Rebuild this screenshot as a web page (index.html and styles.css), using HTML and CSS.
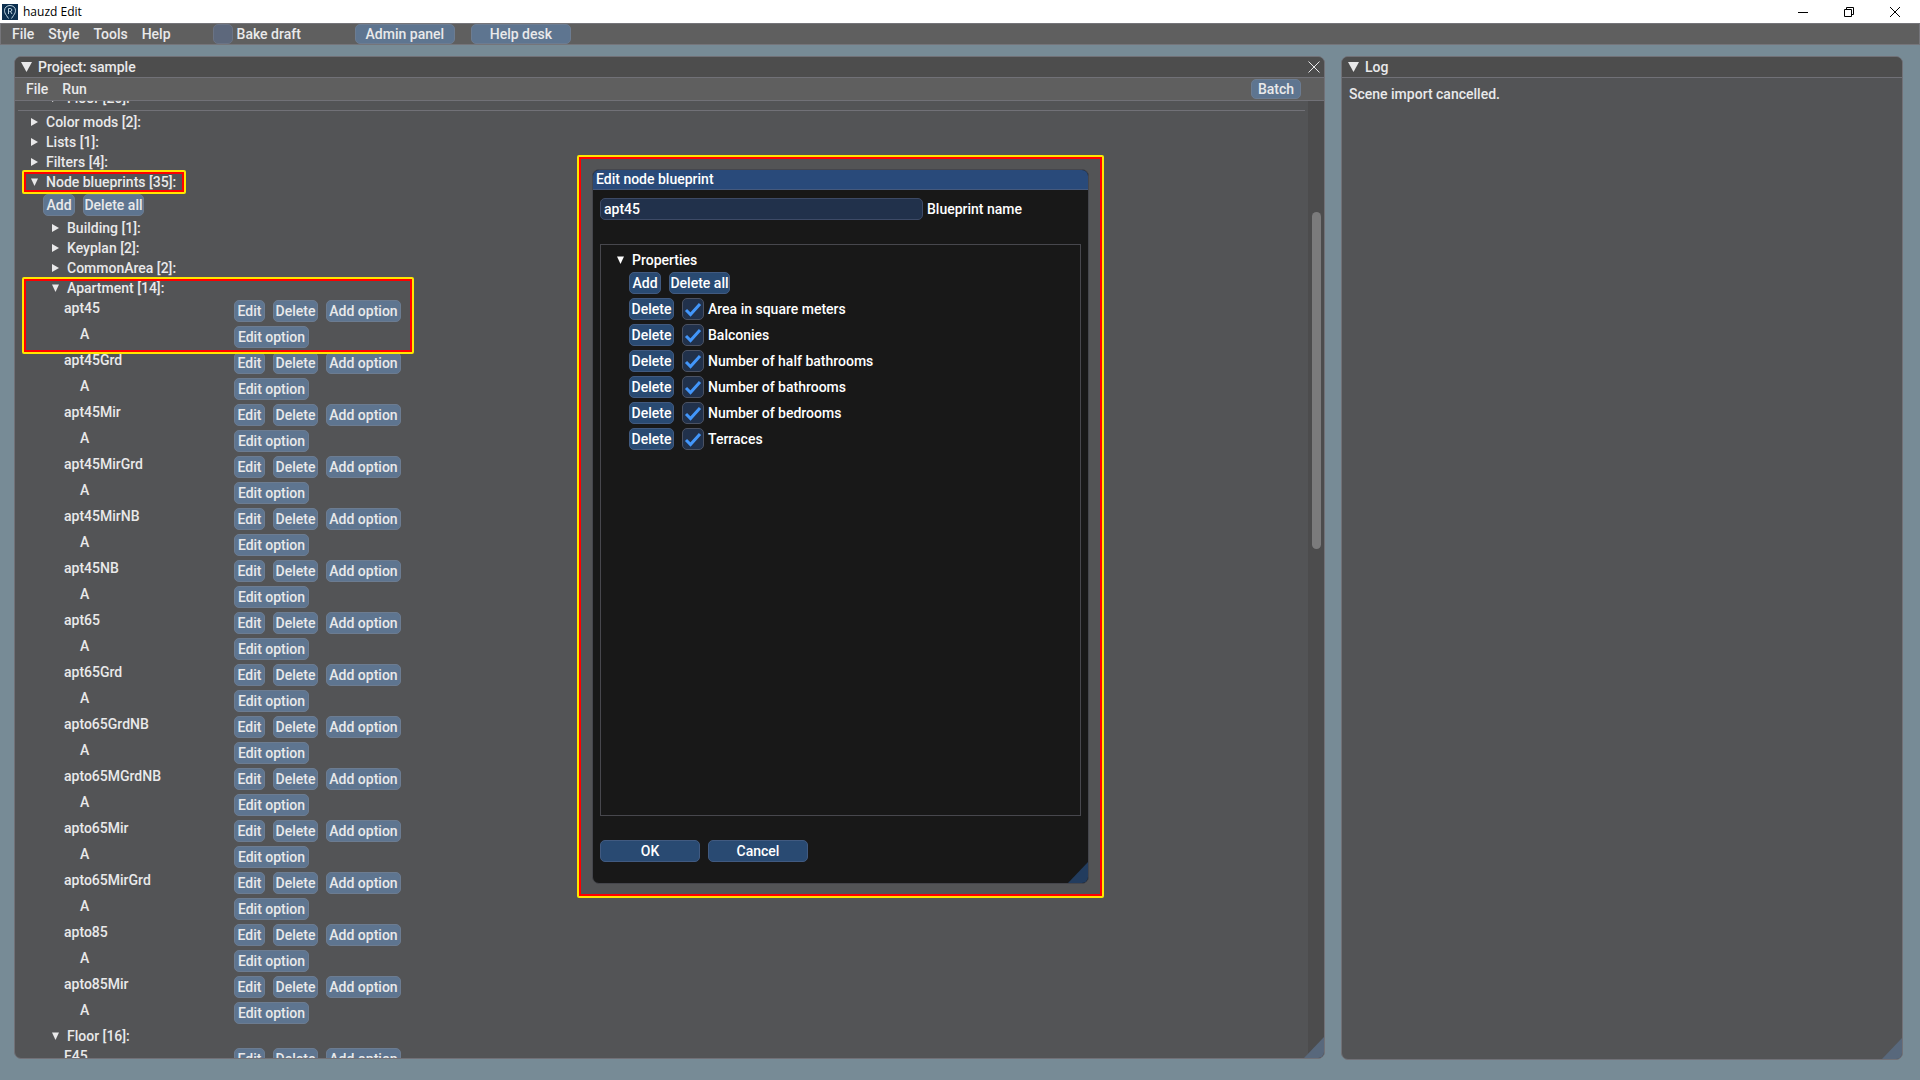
FILE: index.html
```html
<!DOCTYPE html>
<html lang="en">
<head>
<meta charset="utf-8">
<title>hauzd Edit</title>
<link rel="stylesheet" href="styles.css">
</head>
<body>
<header class="titlebar">
  <svg class="logo" viewBox="0 0 16 16" aria-hidden="true"><rect width="16" height="16" fill="#0c2f4f"/><path d="M6.500 14.500L4.500 11.500C3 9.500 2.500 8 2.500 6.500C2.500 3.500 5 1.500 8 1.500S13.500 3.500 13.500 6.500C13.500 8 13 9.500 11.500 11.500L9.500 14.500M6.500 10V4.500H8.500C10.300 4.500 10.300 7.500 8.500 7.500H7.500M8.500 7.500L10 10" fill="none" stroke="#cfe3ee" stroke-width="0.900"/></svg>
  <h1 class="titlebar-name">hauzd Edit</h1>
  <div class="window-controls">
    <button type="button" aria-label="Minimize"><svg viewBox="0 0 12 12"><path d="M1 6.500H11"/></svg></button>
    <button type="button" aria-label="Restore"><svg viewBox="0 0 12 12"><path d="M1.500 3.500H8.500V10.500H1.500ZM3.500 3.500V1.500H10.500V8.500H8.500"/></svg></button>
    <button type="button" aria-label="Close"><svg viewBox="0 0 12 12"><path d="M1 1L11 11M11 1L1 11"/></svg></button>
  </div>
</header>
<nav class="menubar">
  <a href="#">File</a><a href="#">Style</a><a href="#">Tools</a><a href="#">Help</a>
  <label class="bake"><input type="checkbox" class="check">Bake draft</label>
  <div class="menubar-buttons">
    <button type="button" class="btn wide">Admin panel</button>
    <button type="button" class="btn wide">Help desk</button>
  </div>
</nav>
<main class="workspace">
  <section class="window project">
    <header class="window-title"><span class="caret"></span><h2>Project: sample</h2>
      <button type="button" class="close" aria-label="Close"><svg viewBox="0 0 12 12"><path d="M0.500 0.500L11.500 11.500M11.500 0.500L0.500 11.500"/></svg></button>
    </header>
    <nav class="window-menu"><a href="#">File</a><a href="#">Run</a><button type="button" class="btn batch">Batch</button></nav>
    <div class="scroller">
      <div class="tree">
        <div class="node nested"><span class="arrow"></span>Floor [26]:</div>
        <hr class="rule">
        <div class="node"><span class="arrow"></span>Color mods [2]:</div>
        <div class="node"><span class="arrow"></span>Lists [1]:</div>
        <div class="node"><span class="arrow"></span>Filters [4]:</div>
        <div class="node mark mark-node"><span class="arrow open"></span>Node blueprints [35]:</div>
        <div class="actions"><button type="button" class="btn add">Add</button><button type="button" class="btn delete-all">Delete all</button></div>
        <div class="node nested"><span class="arrow"></span>Building [1]:</div>
        <div class="node nested"><span class="arrow"></span>Keyplan [2]:</div>
        <div class="node nested"><span class="arrow"></span>CommonArea [2]:</div>
        <div class="group mark mark-group">
          <div class="node nested"><span class="arrow open"></span>Apartment [14]:</div>
          <div class="entry" data-name="apt45"></div>
        </div>
        <div class="entry" data-name="apt45Grd"></div>
        <div class="entry" data-name="apt45Mir"></div>
        <div class="entry" data-name="apt45MirGrd"></div>
        <div class="entry" data-name="apt45MirNB"></div>
        <div class="entry" data-name="apt45NB"></div>
        <div class="entry" data-name="apt65"></div>
        <div class="entry" data-name="apt65Grd"></div>
        <div class="entry" data-name="apto65GrdNB"></div>
        <div class="entry" data-name="apto65MGrdNB"></div>
        <div class="entry" data-name="apto65Mir"></div>
        <div class="entry" data-name="apto65MirGrd"></div>
        <div class="entry" data-name="apto85"></div>
        <div class="entry" data-name="apto85Mir"></div>
        <div class="node nested"><span class="arrow open"></span>Floor [16]:</div>
        <div class="entry" data-name="F45"></div>
      </div>
      <div class="scrollbar"><div class="thumb"></div></div>
    </div>
    <span class="grip"></span>
  </section>
  <section class="window log">
    <header class="window-title"><span class="caret"></span><h2>Log</h2></header>
    <p class="log-text">Scene import cancelled.</p>
    <span class="grip"></span>
  </section>
</main>
<div class="dialog-mark">
  <form class="dialog" role="dialog" aria-labelledby="dialog-title">
    <h2 class="dialog-title" id="dialog-title">Edit node blueprint</h2>
    <div class="dialog-body">
      <div class="field"><input type="text" id="bp-name" class="text-input" value="apt45"><label for="bp-name">Blueprint name</label></div>
      <div class="properties">
        <div class="node"><span class="arrow open"></span>Properties</div>
        <div class="prop-row"><button type="button" class="btn add">Add</button><button type="button" class="btn delete-all">Delete all</button></div>
        <div class="prop-row"><button type="button" class="btn delete">Delete</button><label><input type="checkbox" class="check" checked>Area in square meters</label></div>
        <div class="prop-row"><button type="button" class="btn delete">Delete</button><label><input type="checkbox" class="check" checked>Balconies</label></div>
        <div class="prop-row"><button type="button" class="btn delete">Delete</button><label><input type="checkbox" class="check" checked>Number of half bathrooms</label></div>
        <div class="prop-row"><button type="button" class="btn delete">Delete</button><label><input type="checkbox" class="check" checked>Number of bathrooms</label></div>
        <div class="prop-row"><button type="button" class="btn delete">Delete</button><label><input type="checkbox" class="check" checked>Number of bedrooms</label></div>
        <div class="prop-row"><button type="button" class="btn delete">Delete</button><label><input type="checkbox" class="check" checked>Terraces</label></div>
      </div>
      <div class="dialog-buttons"><button type="button" class="btn">OK</button><button type="button" class="btn">Cancel</button></div>
    </div>
    <span class="grip"></span>
  </form>
</div>
<script src="app.js"></script>
</body>
</html>
```
FILE: app.js
```js
document.querySelectorAll('.entry').forEach(function (entry) {
  entry.innerHTML =
    '<div class="row"><span class="name"></span>' +
    '<button type="button" class="btn edit">Edit</button>' +
    '<button type="button" class="btn delete">Delete</button>' +
    '<button type="button" class="btn option-btn">Add option</button></div>' +
    '<div class="row"><span class="name option">A</span>' +
    '<button type="button" class="btn option-btn">Edit option</button></div>';
  entry.querySelector('.name').textContent = entry.dataset.name;
});
```
FILE: styles.css
```css
*, *::before { box-sizing: border-box; }
html, body { height: 100%; }
body {
  margin: 0;
  display: flex;
  flex-direction: column;
  overflow: hidden;
  position: relative;
  background: #778b96;
  color: #e9e9ea;
  font: 500 14px/16px Roboto, sans-serif;
}
h1, h2, p { margin: 0; font: inherit; }
a { color: inherit; text-decoration: none; }
button, input { font: inherit; color: inherit; }
button { padding: 0; border: 0; background: none; }

.titlebar {
  flex: none;
  display: flex;
  align-items: center;
  height: 23px;
  padding: 0 19px 0 2px;
  background: #fff;
  color: #000;
}
.logo { width: 16px; height: 16px; }
.titlebar-name { margin-left: 5px; font: 12px/16px "Open Sans", sans-serif; }
.window-controls { display: flex; gap: 34px; margin-left: auto; }
.window-controls button { width: 12px; height: 12px; }
svg { display: block; }
.window-controls path, .close path { fill: none; stroke: currentColor; }

.menubar {
  flex: none;
  display: flex;
  align-items: center;
  gap: 14px;
  height: 22px;
  padding: 0 11px;
  background: #5f5f5f;
  border: 1px solid #75757a;
}
.bake { display: flex; align-items: center; gap: 4px; margin: 0 40px 0 28px; }
.menubar-buttons { display: flex; gap: 16px; }
.btn {
  height: 22px;
  border: 1px solid #6c7c91;
  border-radius: 5px;
  background: #5e7590;
  white-space: nowrap;
}
.wide { width: 100px; height: 20px; }
.add { width: 32px; }
.edit { width: 31px; }
.delete { width: 45px; }
.delete-all { width: 61px; }
.option-btn { width: 75px; }
.check {
  appearance: none;
  width: 22px;
  height: 22px;
  margin: 0;
  border: 1px solid #4b5263;
  border-radius: 5px;
  background: #21314b;
}
.menubar .check { width: 20px; height: 20px; background: #5d687c; border-color: #6a7384; }

.workspace {
  flex: 1;
  min-height: 0;
  display: grid;
  grid-template-columns: 1311fr 562fr;
  gap: 16px;
  padding: 11px 17px 20px 14px;
}
.window {
  position: relative;
  display: flex;
  flex-direction: column;
  min-width: 0;
  min-height: 0;
  overflow: hidden;
  border: 1px solid #717177;
  border-radius: 7px;
  background: #535456;
}
.project { margin-bottom: 1px; }
.window-title {
  flex: none;
  display: flex;
  align-items: center;
  height: 21px;
  gap: 6px;
  padding: 0 4px 0 6px;
  background: #4d4d4d;
  border-bottom: 1px solid #717177;
}
.caret { width: 11px; height: 10px; background: currentColor; clip-path: polygon(0 0, 100% 0, 50% 100%); }
.close { width: 12px; height: 12px; margin-left: auto; }
.window-menu {
  flex: none;
  display: flex;
  align-items: center;
  gap: 14px;
  height: 23px;
  padding: 0 23px 0 11px;
  background: #5f5f5f;
  border-bottom: 1px solid #717177;
}
.batch { width: 50px; height: 20px; margin-left: auto; }
.scroller { flex: 1; min-height: 0; display: flex; overflow: hidden; }
.tree {
  flex: 1;
  display: flex;
  flex-direction: column;
  gap: 4px;
  margin-top: -11px;
  padding: 0 3px;
}
.tree > * { flex: none; }
.rule { width: 100%; height: 1px; margin: 0 0 -1px; border: 0; background: #717177; }
.node { display: flex; align-items: center; gap: 8px; height: 16px; padding-left: 13px; }
.nested { padding-left: 34px; }
.arrow { width: 7px; height: 8px; background: currentColor; clip-path: polygon(0 0, 100% 50%, 0 100%); }
.arrow.open { clip-path: polygon(0 6%, 100% 6%, 50% 100%); }
.actions { display: flex; gap: 8px; padding-left: 25px; }
.group, .entry { display: flex; flex-direction: column; gap: 4px; }
.row { display: flex; height: 22px; gap: 8px; padding-left: 46px; }
.name { width: 162px; }
.name.option { padding-left: 16px; }

/* Two-colour frame that surrounds an item without taking space */
.mark { position: relative; z-index: 1; }
.mark::before {
  content: "";
  position: absolute;
  border: 2px solid #ffe600;
  border-radius: 2px;
  box-shadow: inset 0 0 0 2px #f00;
  pointer-events: none;
}
.mark-node::before { left: 4px; top: -4px; width: 164px; height: 24px; }
.mark-group::before { left: 4px; top: -3px; width: 392px; bottom: -6px; }

.scrollbar { flex: none; width: 16px; background: #4c4c4d; padding: 111px 3px 0 4px; }
.thumb { height: 337px; border-radius: 5px; background: #7b7b7c; }
.grip {
  position: absolute;
  right: 0;
  bottom: 0;
  width: 20px;
  height: 21px;
  background: #58687c;
  clip-path: polygon(100% 0, 100% 100%, 0 100%);
}
.log-text { padding: 8px 7px; }

.dialog-mark {
  position: absolute;
  left: 577px;
  top: 155px;
  width: 527px;
  padding: 12px 13px;
  border: 2px solid #ffe600;
  border-radius: 2px;
  box-shadow: inset 0 0 0 2px #f00;
}
.dialog {
  position: relative;
  overflow: hidden;
  border: 1px solid #45464c;
  border-radius: 7px;
  background: #181818;
  color: #fff;
}
.dialog-title {
  height: 20px;
  padding: 1px 3px;
  background: #294a7a;
  border-bottom: 1px solid #45597c;
}
.dialog-body { padding: 8px 7px 21px; }
.field { display: flex; align-items: center; gap: 4px; }
.text-input {
  width: 323px;
  height: 22px;
  padding: 0 3px;
  border: 1px solid #3d4a66;
  border-radius: 5px;
  background: #21314b;
}
.properties { height: 572px; margin: 24px 0; padding: 7px 4px; border: 1px solid #47474d; }
.properties .node { padding-left: 12px; }
.prop-row { display: flex; gap: 8px; margin-top: 4px; padding-left: 24px; }
.prop-row label { display: flex; align-items: center; gap: 4px; }
.dialog .btn { background: #294a72; border-color: #415a80; }
.dialog .check:checked {
  background: #21314b url("data:image/svg+xml,%3Csvg xmlns='http://www.w3.org/2000/svg' viewBox='0 0 20 20'%3E%3Cpath d='M3 11L7.500 15.500L17 5' fill='none' stroke='%234296fa' stroke-width='3'/%3E%3C/svg%3E") center / 20px 20px no-repeat;
}
.dialog-buttons { display: flex; gap: 8px; }
.dialog-buttons .btn { width: 100px; }
.dialog .grip { background: #223c5e; }
```
